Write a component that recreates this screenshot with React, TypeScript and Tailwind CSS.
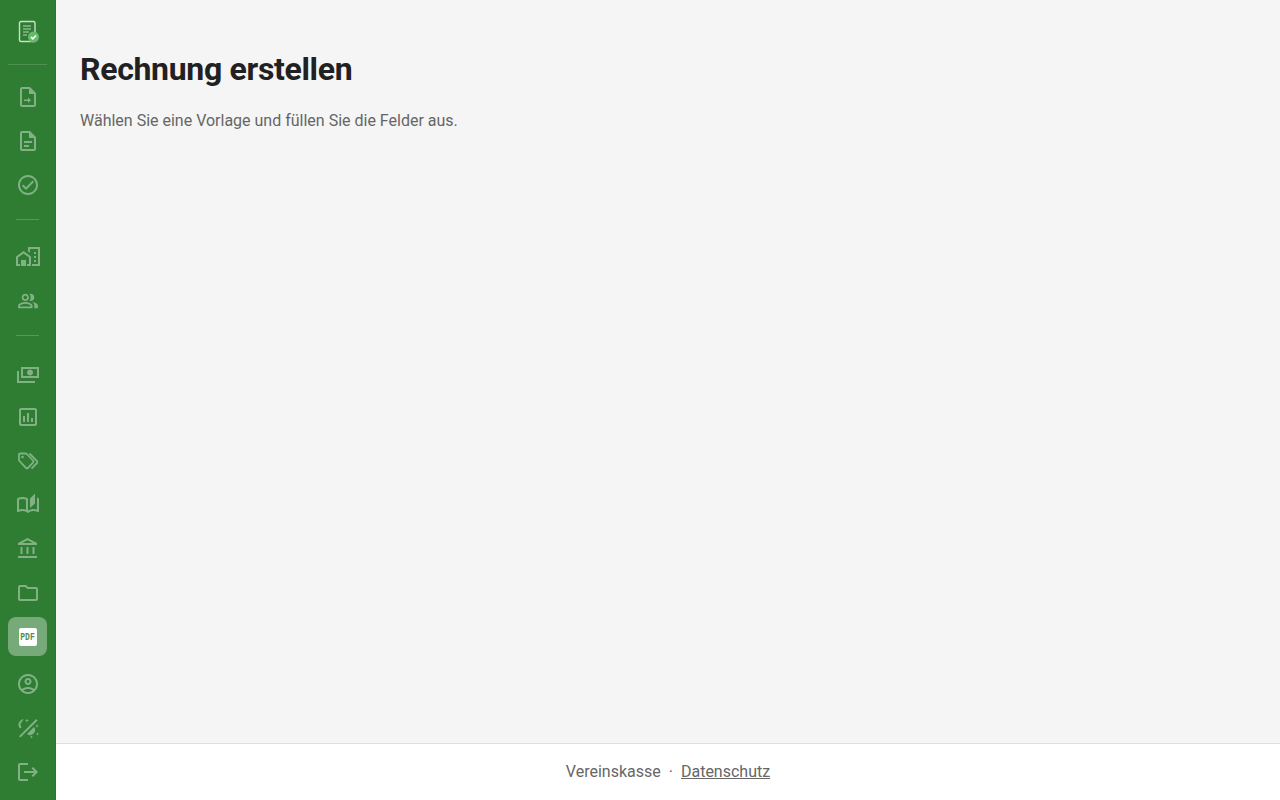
const docPath = "M14 2H6c-1.100 0-2 .9-2 2v16c0 1.100.89 2 1.990 2H18c1.100 0 2-.9 2-2V8l-6-6zm4 18H6V4h7v5h5v11z";

type NavIcon = { paths: string[]; dim?: string[]; strokes?: string[]; className?: string };

const section1: NavIcon[] = [
  { paths: [docPath, "M12 12.500l3 2.750-3 2.750v-2H8v-1.500h4z"] },
  { paths: [docPath, "M8 12h8v2H8zm0 4h5v2H8z"] },
  {
    paths: [
      "M12 2C6.480 2 2 6.480 2 12s4.480 10 10 10 10-4.480 10-10S17.520 2 12 2zm0 18c-4.410 0-8-3.590-8-8s3.590-8 8-8 8 3.590 8 8-3.590 8-8 8zm4.590-12.420L10 14.170l-2.590-2.580L6 13l4 4 8-8z",
    ],
  },
];

const section2: NavIcon[] = [
  {
    paths: [
      "M0 21V11.500L7.500 6 15 11.500V21h-4v-2h2v-6.500L7.500 8.500 2 12.500V19h2v2z",
      "M5 15h5v6H5z",
      "M12 2v4.200l2 1.500V4h8v15h-6v2h8V2z",
      "M18 7h2v2h-2zm0 4h2v2h-2zm0 4h2v2h-2z",
    ],
  },
  {
    className: "scale-90",
    paths: [
      "M16.670 13.130C18.040 14.060 19 15.320 19 17v3h4v-3c0-2.180-3.570-3.470-6.330-3.870z",
      "M15 12c2.210 0 4-1.790 4-4s-1.790-4-4-4c-.47 0-.91.1-1.330.24C14.500 5.270 15 6.580 15 8s-.5 2.730-1.330 3.760c.42.14.86.24 1.330.24z",
      "M9 12c2.210 0 4-1.790 4-4s-1.790-4-4-4-4 1.790-4 4 1.790 4 4 4zm0-6c1.100 0 2 .9 2 2s-.9 2-2 2-2-.9-2-2 .9-2 2-2z",
      "M9 13c-2.670 0-8 1.340-8 4v3h16v-3c0-2.660-5.330-4-8-4zm6 5H3v-.99C3.200 16.290 6.300 15 9 15s5.800 1.290 6 2v1z",
    ],
  },
];

const section3: NavIcon[] = [
  {
    className: "translate-y-[2px]",
    paths: [
      "M5 4h18v11H5zm2 2v7h14V6z",
      "M14 6.500c-1.700 0-3 1.300-3 3s1.300 3 3 3 3-1.300 3-3-1.300-3-3-3z",
      "M1 8h2v10h16v2H1z",
    ],
  },
  {
    paths: [
      "M19 3H5c-1.100 0-2 .9-2 2v14c0 1.100.9 2 2 2h14c1.100 0 2-.9 2-2V5c0-1.100-.9-2-2-2zm0 16H5V5h14v14zM7 11h2v6H7zm4-3h2v9h-2zm4 5h2v4h-2z",
    ],
  },
  {
    strokes: [
      "M4 4.500h5.500c.5 0 .9.2 1.300.5l6.200 6.500c.6.6.6 1.500 0 2.100l-5 5.200c-.6.6-1.500.6-2.100 0L3.500 12c-.3-.3-.5-.8-.5-1.200V5.500c0-.6.4-1 1-1z",
      "M13.500 4.500l7.500 7.700c.5.5.5 1.300 0 1.800L15.500 19.700",
    ],
    paths: ["M6.500 6.700a1.300 1.300 0 1 0 0 2.600 1.300 1.300 0 0 0 0-2.600z"],
  },
  {
    paths: [
      "M22.470 5.200C22 4.960 21.510 4.760 21 4.590v12.030C19.860 16.210 18.690 16 17.500 16c-1.900 0-3.780.54-5.500 1.580V5.480C10.380 4.550 8.510 4 6.500 4 4.710 4 3.020 4.470 1.530 5.200c-.33.16-.53.51-.53.88v12.080c0 .76.79 1.230 1.480.87C3.690 18.400 5.050 18 6.500 18c2.070 0 3.980.82 5.500 2 1.520-1.180 3.430-2 5.500-2 1.450 0 2.810.4 4.020 1.040.69.36 1.480-.11 1.480-.87V6.080c0-.37-.2-.72-.53-.88zM10 16.620C8.860 16.210 7.690 16 6.500 16c-1.190 0-2.360.21-3.500.62V6.710C4.110 6.240 5.280 6 6.500 6c1.200 0 2.390.25 3.500.72v9.900z",
      "M19 .5l-5 5V15l5-4.500V.5z",
    ],
  },
  {
    paths: [
      "M6.500 10h-2v7h2v-7zm6 0h-2v7h2v-7zm8.500 9H2v2h19v-2zm-2.500-9h-2v7h2v-7zm-7-6.740L16.710 6H6.290l5.210-2.740m0-2.260L2 6v2h19V6l-9.500-5z",
    ],
  },
  {
    paths: [
      "M9.170 6l2 2H20v10H4V6h5.170M10 4H4c-1.100 0-1.990.9-1.990 2L2 18c0 1.100.9 2 2 2h16c1.100 0 2-.9 2-2V8c0-1.100-.9-2-2-2h-8l-2-2z",
    ],
  },
];

const section4: NavIcon[] = [
  {
    paths: [
      "M12 2C6.480 2 2 6.480 2 12s4.480 10 10 10 10-4.480 10-10S17.520 2 12 2zM7.350 18.500C8.660 17.560 10.260 17 12 17s3.340.56 4.650 1.500c-1.310.94-2.910 1.500-4.650 1.500s-3.340-.56-4.650-1.500zm10.790-1.380C16.450 15.800 14.320 15 12 15s-4.450.8-6.140 2.120C4.700 15.730 4 13.950 4 12c0-4.420 3.580-8 8-8s8 3.580 8 8c0 1.950-.7 3.730-1.860 5.120z",
      "M12 6c-1.930 0-3.500 1.570-3.500 3.500S10.070 13 12 13s3.500-1.570 3.500-3.500S13.930 6 12 6zm0 5c-.83 0-1.500-.67-1.500-1.500S11.170 8 12 8s1.500.67 1.500 1.500S12.830 11 12 11z",
    ],
  },
  {
    paths: [
      "M4.400 21.600 3 20.200 20.200 3l1.400 1.400z",
      "M7.500 3C4.800 3.700 2.500 6 2.500 8.700c0 1.500.6 2.900 1.600 3.900l1.400-1.400C4.900 10.500 4.500 9.600 4.500 8.700c0-1.300.6-2.500 1.600-3.300z",
      "M11 2.500l.6 1.400 1.400.6-1.400.6-.6 1.400-.6-1.400-1.400-.6 1.400-.6z",
      "M18 11A5 5 0 0 1 11 18z",
      "M21 8l.5 1.500 1.500.5-1.500.5-.5 1.500-.5-1.500-1.500-.5 1.500-.5z",
      "M21.500 16.500l.5 1 1 .5-1 .5-.5 1-.5-1-1-.5 1-.5z",
      "M15.500 19.500l.5 1 1 .5-1 .5-.5 1-.5-1-1-.5 1-.5z",
    ],
  },
  {
    paths: [
      "M17 7l-1.410 1.410L18.170 11H8v2h10.170l-2.580 2.580L17 17l5-5zM4 5h8V3H4c-1.100 0-2 .9-2 2v14c0 1.100.9 2 2 2h8v-2H4V5z",
    ],
  },
];

function NavItem({ icon }: { icon: NavIcon }) {
  return (
    <a className="flex h-11 w-10 items-center justify-center text-white/40">
      <svg viewBox="0 0 24 24" fill="currentColor" className={`h-6 w-6 ${icon.className ?? ""}`}>
        {icon.dim?.map((d) => (
          <path key={d} d={d} fillOpacity="0.5" />
        ))}
        {icon.strokes?.map((d) => (
          <path key={d} d={d} fill="none" stroke="currentColor" strokeWidth="1.800" strokeLinejoin="round" />
        ))}
        {icon.paths.map((d) => (
          <path key={d} d={d} />
        ))}
      </svg>
    </a>
  );
}

function Divider() {
  return <div className="mt-3 mb-[15px] h-px w-[23px] bg-white/20" />;
}

export default function App() {
  return (
    <div
      className="flex h-screen bg-[#f5f5f5] text-[#212121]"
      style={{ fontFamily: "Roboto, 'Liberation Sans', sans-serif" }}
    >
      {/* Sidebar */}
      <aside className="flex w-14 shrink-0 flex-col items-center overflow-hidden border-r border-black/5 bg-[#2e7d32]">
        <a className="flex h-16 w-full items-center justify-center">
          <svg viewBox="0 0 24 24" className="h-6 w-6">
            <rect x="3.500" y="1.500" width="15.500" height="20" rx="1.500" fill="none" stroke="#ffffff" strokeOpacity="0.75" strokeWidth="1.400" />
            <path d="M7 6h8M7 9h8M7 12h6M7 15h4" stroke="#ffffff" strokeOpacity="0.45" strokeWidth="1.300" />
            <circle cx="17.500" cy="17" r="5.500" fill="#66bb6a" />
            <path d="M15 17l1.800 1.800 3.200-3.300" fill="none" stroke="#ffffff" strokeWidth="1.700" />
          </svg>
        </a>
        <div className="h-px w-[39px] bg-white/15" />
        <div className="mt-[10px] flex flex-col items-center">
          {section1.map((icon, i) => (
            <NavItem key={i} icon={icon} />
          ))}
        </div>
        <Divider />
        {section2.map((icon, i) => (
          <NavItem key={i} icon={icon} />
        ))}
        <Divider />
        {section3.map((icon, i) => (
          <NavItem key={i} icon={icon} />
        ))}
        <a className="mt-[2px] flex h-[39px] w-[39px] items-center justify-center rounded-lg bg-white/35">
          <span
            className="flex h-[18px] w-[18px] items-center justify-center rounded-[2px] bg-white text-[8px] font-bold leading-none text-[#4f9153]"
            style={{ fontFamily: "'Liberation Mono', monospace" }}
          >
            <span className="scale-y-125">PDF</span>
          </span>
        </a>
        <div className="mt-[6px] flex flex-col items-center">
          {section4.map((icon, i) => (
            <NavItem key={i} icon={icon} />
          ))}
        </div>
      </aside>

      {/* Main */}
      <div className="flex min-w-0 flex-1 flex-col">
        <main className="flex-1 px-6 pt-[48px]">
          <h1 className="text-[32px] font-bold leading-[42px] tracking-[-0.01em] text-[#212121]">
            Rechnung erstellen
          </h1>
          <p className="mt-[19px] text-base leading-[24px] text-[#666666]">
            Wählen Sie eine Vorlage und füllen Sie die Felder aus.
          </p>
        </main>
        <footer className="flex h-[57px] items-center justify-center gap-2 border-t border-[#e0e0e0] bg-white text-base text-[#666666]">
          <span>Vereinskasse</span>
          <span>·</span>
          <a className="underline">Datenschutz</a>
        </footer>
      </div>
    </div>
  );
}
